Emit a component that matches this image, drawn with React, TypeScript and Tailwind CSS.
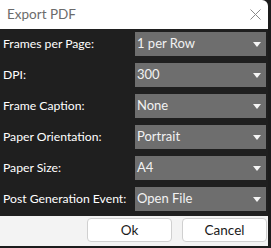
import React from 'react';

const fields = [
  { label: 'Frames per Page:', value: '1 per Row' },
  { label: 'DPI:', value: '300' },
  { label: 'Frame Caption:', value: 'None' },
  { label: 'Paper Orientation:', value: 'Portrait' },
  { label: 'Paper Size:', value: 'A4' },
  { label: 'Post Generation Event:', value: 'Open File' },
];

function Combo({ value }: { value: string }) {
  return (
    <div className="flex h-[24px] w-[131px] shrink-0 items-center justify-between bg-[#6e6e6e] pl-[2px] pr-[5px] text-[13px] text-[#f2f2f2]">
      <span>{value}</span>
      <svg width="8" height="5" viewBox="0 0 8 5" className="mt-[1px]">
        <path d="M0 0 L8 0 L4 5 Z" fill="#f5f5f5" />
      </svg>
    </div>
  );
}

export default function App() {
  return (
    <div
      className="flex h-[248px] w-[271px] flex-col overflow-hidden bg-[#1c1c1c] pr-[3px] pb-[2px]"
      style={{ fontFamily: 'Lato, "Noto Sans", sans-serif' }}
    >
      <div className="flex h-[29px] shrink-0 items-center justify-between rounded-tr-[6px] bg-white pl-[7px] pr-[7px]">
        <span className="text-[13.5px] text-[#6b6b6b]">Export PDF</span>
        <svg width="11" height="11" viewBox="0 0 11 11">
          <path d="M0.5 0.5 L10.5 10.5 M10.5 0.5 L0.5 10.5" stroke="#8a8a8a" strokeWidth="1" />
        </svg>
      </div>

      <div className="flex shrink-0 flex-col gap-[7px] bg-[#1f1f1f] pt-[3px] pb-[5px] pl-[3px] pr-[2px]">
        {fields.map((f) => (
          <div key={f.label} className="flex items-center justify-between">
            <span className="whitespace-nowrap text-[12.2px] text-white">{f.label}</span>
            <Combo value={f.value} />
          </div>
        ))}
      </div>

      <div className="flex flex-1 items-start justify-end gap-[10px] bg-[#f3f3f3] pt-[2px] pr-[1px]">
        <button className="h-[24px] w-[85px] rounded-[4px] border border-[#d0d0d0] bg-white text-[13.5px] text-[#1a1a1a]">
          Ok
        </button>
        <button className="h-[24px] w-[85px] rounded-[4px] border border-[#d0d0d0] bg-white text-[13.5px] text-[#1a1a1a]">
          Cancel
        </button>
      </div>
    </div>
  );
}
